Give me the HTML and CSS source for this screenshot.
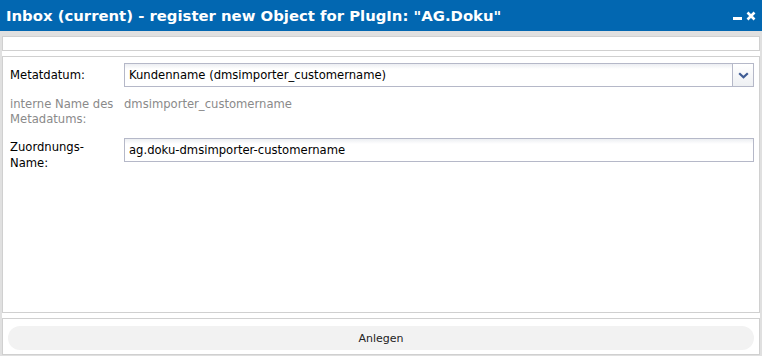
FILE: index.html
```html
<!DOCTYPE html>
<html lang="de">
<head>
  <meta charset="UTF-8">
  <title>Inbox (current) - register new Object</title>
  <link rel="stylesheet" href="styles.css">
</head>
<body>
  <div class="window">
    <div class="header">
      <span class="title">Inbox (current) - register new Object for PlugIn: "AG.Doku"</span>
      <div class="tools">
        <svg width="9" height="9" viewBox="0 0 9 9"><rect x="0" y="5" width="9" height="3" fill="#fff"/></svg>
        <svg width="10" height="10" viewBox="0 0 10 10"><path d="M1.5 1.5 L8.5 8.5 M8.5 1.5 L1.5 8.5" stroke="#fff" stroke-width="2.6"/></svg>
      </div>
    </div>
    <div class="body">
      <div class="topbar"></div>
      <div class="form">
        <div class="row">
          <label>Metatdatum:</label>
          <div class="combo">
            <span>Kundenname (dmsimporter_customername)</span>
            <div class="trigger">
              <svg width="11" height="7" viewBox="0 0 11 7"><path d="M1.2 1.2 L5.5 5.3 L9.8 1.2" fill="none" stroke="#3f5c94" stroke-width="2.2"/></svg>
            </div>
          </div>
        </div>
        <div class="row muted">
          <label>interne Name des Metadatums:</label>
          <div class="value">dmsimporter_customername</div>
        </div>
        <div class="row tall">
          <label>Zuordnungs-Name:</label>
          <div class="field">ag.doku-dmsimporter-customername</div>
        </div>
      </div>
      <div class="footer">
        <button class="btn">Anlegen</button>
      </div>
    </div>
  </div>
</body>
</html>
```

FILE: styles.css
```css
* {
  margin: 0;
  padding: 0;
  box-sizing: border-box;
}
body {
  background-color: #fff;
  font-family: "DejaVu Sans", Verdana, sans-serif;
  font-size: 11.6px;
  color: #000;
}
.window {
  width: 762px;
  height: 356px;
  display: flex;
  flex-direction: column;
  background-color: #e0e0e0;
}
.header {
  height: 31px;
  background-color: #0267b1;
  display: flex;
  align-items: center;
  justify-content: space-between;
  padding: 0 6px 0 6px;
}
.title {
  color: #fff;
  font-weight: bold;
  font-size: 14.85px;
  white-space: nowrap;
}
.tools {
  display: flex;
  gap: 4px;
  align-items: center;
  margin-top: 1px;
}
.body {
  flex: 1;
  display: flex;
  flex-direction: column;
  padding: 5px 2px 1px 2px;
}
.topbar {
  height: 15px;
  background-color: #fff;
  border: 1px solid #d0d0d0;
}
.form {
  flex: 1;
  margin-top: 5px;
  background-color: #fff;
  border: 1px solid #d0d0d0;
  padding: 6px 5px 0 6px;
  box-shadow: 0 -5px 0 #fff;
}
.row {
  display: flex;
  align-items: flex-start;
  margin-bottom: 9px;
}
.row label {
  width: 115px;
  flex-shrink: 0;
  line-height: 16px;
  padding: 4px 8px 0 1px;
}
.combo, .field {
  flex: 1;
  height: 24px;
  border: 1px solid #b5b8c8;
  background: linear-gradient(#eceef2, #fff 5px);
  display: flex;
  align-items: center;
  padding-left: 4px;
  line-height: 15px;
}
.combo span {
  flex: 1;
}
.trigger {
  width: 21px;
  height: 22px;
  border-left: 1px solid #b5b8c8;
  background: linear-gradient(#fff, #eef0f3);
  display: flex;
  align-items: center;
  justify-content: center;
}
.muted {
  color: #8a8a8a;
  margin-bottom: 11px;
}
.muted label {
  padding-top: 0;
  line-height: 15px;
  margin-top: 1px;
}
.muted .value {
  line-height: 15px;
  margin-top: 1px;
}
.tall label {
  padding-top: 1px;
}
.footer {
  height: 37px;
  margin-top: 5px;
  background-color: #fff;
  border: 1px solid #d0d0d0;
  padding: 7px 5px 0 5px;
  box-shadow: 0 -5px 0 #fff;
}
.btn {
  width: 100%;
  height: 24px;
  border: none;
  border-radius: 12px;
  background-color: #f2f2f2;
  font-family: "DejaVu Sans", Verdana, sans-serif;
  font-size: 11px;
  color: #222;
}
```
